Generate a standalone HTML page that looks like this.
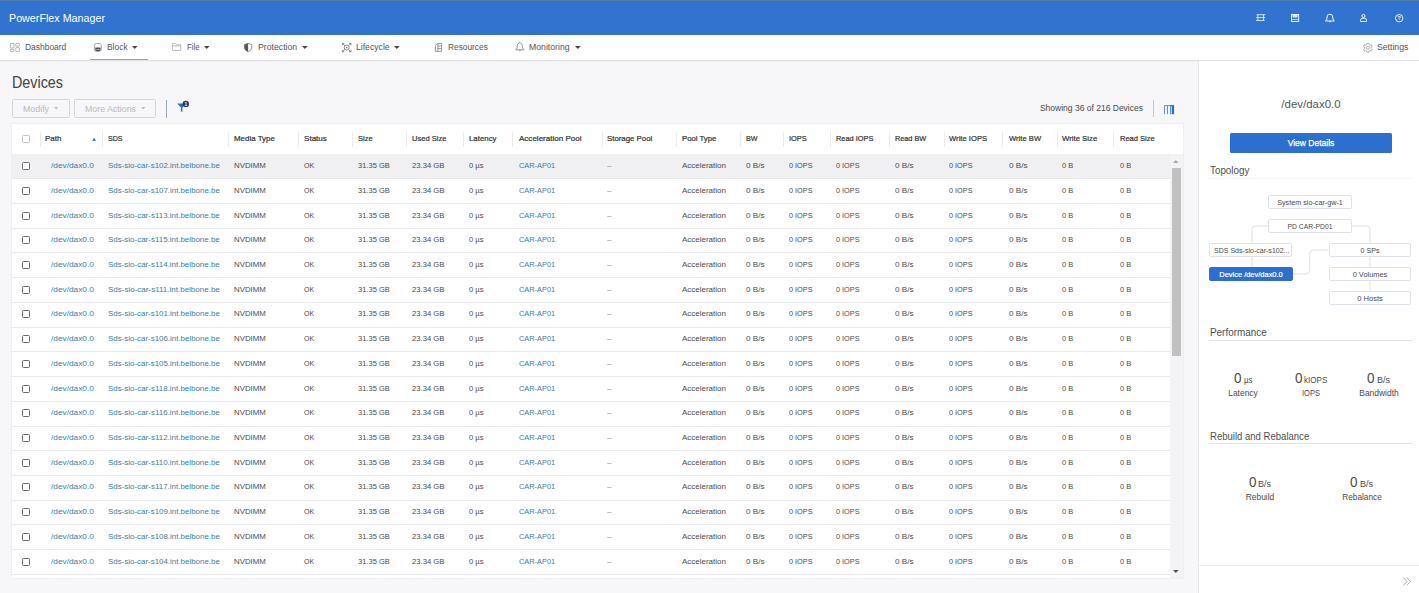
<!DOCTYPE html>
<html lang="en"><head><meta charset="utf-8"><title>PowerFlex Manager</title>
<style>
html,body{margin:0;padding:0}
body{width:1419px;height:593px;overflow:hidden;position:relative;background:#f7f6f8;font-family:"Liberation Sans", sans-serif;color:#4b4b4b}
.t{position:absolute;white-space:nowrap}
.abs{position:absolute}
.row{position:absolute;left:12px;width:1157.5px;height:24.8px;box-sizing:border-box;background:#fff}
.row.sel{background:#f0eff2}
.ln{position:absolute;left:12px;width:1157.5px;height:1px;background:#e9e8eb}
.cb{position:absolute;width:8px;height:8px;box-sizing:border-box;border:1px solid #6a6a6a;border-radius:1.5px;background:#fff}
.sep{position:absolute;width:1px;background:#ebeaed}
.box{position:absolute;box-sizing:border-box;border:1px solid #dfe1e8;border-radius:2px;background:#fff}
svg{position:absolute;overflow:visible}

</style></head><body>
<div class="abs" style="left:0;top:0;width:1419px;height:34.8px;background:#3273cf"></div>
<div class="abs" style="left:0;top:0;width:1419px;height:1px;background:#4f7fae"></div>
<div class="t" style="left:8.50px;top:10.83px;font-size:11.8px;line-height:15.34px;color:#fff;transform:scaleX(0.9094);transform-origin:0 50%;">PowerFlex Manager</div>
<svg style="left:1256px;top:14.1px" width="9.6" height="7.2" viewBox="0 0 9.6 7.2"><g fill="none" stroke="#eaf1fc" stroke-width="0.85"><path d="M0.6 0.7H9.4M0 3.6H9M0 6.5H8.6"/><path d="M1.9 0.7V6.5M7.6 0.7V6.5"/></g></svg>
<svg style="left:1291px;top:14px" width="8.2" height="8" viewBox="0 0 8.2 8"><rect x="0.5" y="0.5" width="7.2" height="7" fill="none" stroke="#fff" stroke-width="0.9"/><rect x="1.6" y="0.9" width="5" height="2.6" fill="#dfe9f8"/><path d="M0.5 5.6H7.7" stroke="#fff" stroke-width="0.7"/></svg>
<svg style="left:1324.8px;top:13.9px" width="9.8" height="8.4" viewBox="0 0 9.8 8.4"><path d="M3.6 0.5H6.2Q7.2 0.5 7.4 1.6L8.2 5.6L9.3 7H0.5L1.6 5.6L2.4 1.6Q2.6 0.5 3.6 0.5Z" fill="none" stroke="#fff" stroke-width="0.95" stroke-linejoin="round"/><path d="M4 7.5Q4.9 8.4 5.8 7.5" fill="none" stroke="#fff" stroke-width="0.8"/></svg>
<svg style="left:1360.4px;top:14.1px" width="7" height="8" viewBox="0 0 7 8"><g fill="none" stroke="#fff" stroke-width="0.9"><circle cx="3.5" cy="2" r="1.55"/><path d="M0.5 7.5V6.2Q0.5 4.4 2.3 4.4H4.7Q6.5 4.4 6.5 6.2V7.5Z" stroke-linejoin="round"/></g></svg>
<svg style="left:1394.7px;top:13.9px" width="8.4" height="8.4" viewBox="0 0 8.4 8.4"><circle cx="4.2" cy="4.2" r="3.7" fill="none" stroke="#fff" stroke-width="0.9"/><text x="4.2" y="6.2" font-size="5.4" font-weight="700" fill="#fff" text-anchor="middle" font-family='"Liberation Sans",sans-serif'>?</text></svg>

<div class="abs" style="left:0;top:34.8px;width:1419px;height:26.1px;background:#fff;border-bottom:1px solid #e1e0e3;box-sizing:border-box"></div>
<div class="abs" style="left:0;top:61px;width:1419px;height:1px;background:#f1f0f3"></div>
<div class="t" style="left:24.70px;top:42.41px;font-size:8.9px;line-height:11.57px;color:#555;transform:scaleX(0.9511);transform-origin:0 50%;">Dashboard</div>
<div class="t" style="left:106.90px;top:42.41px;font-size:8.9px;line-height:11.57px;color:#555;transform:scaleX(0.9492);transform-origin:0 50%;">Block</div>
<div class="t" style="left:186.60px;top:42.41px;font-size:8.9px;line-height:11.57px;color:#555;transform:scaleX(0.8803);transform-origin:0 50%;">File</div>
<div class="t" style="left:257.90px;top:42.41px;font-size:8.9px;line-height:11.57px;color:#555;transform:scaleX(0.9808);transform-origin:0 50%;">Protection</div>
<div class="t" style="left:355.70px;top:42.41px;font-size:8.9px;line-height:11.57px;color:#555;transform:scaleX(0.9730);transform-origin:0 50%;">Lifecycle</div>
<div class="t" style="left:447.90px;top:42.41px;font-size:8.9px;line-height:11.57px;color:#555;transform:scaleX(0.9382);transform-origin:0 50%;">Resources</div>
<div class="t" style="left:529.40px;top:42.41px;font-size:8.9px;line-height:11.57px;color:#555;transform:scaleX(0.9798);transform-origin:0 50%;">Monitoring</div>
<div class="t" style="left:1376.90px;top:42.41px;font-size:8.9px;line-height:11.57px;color:#555;transform:scaleX(0.9757);transform-origin:0 50%;">Settings</div>
<svg style="left:132.2px;top:45.9px" width="5.6" height="3" viewBox="0 0 5.6 3"><path d="M0 0H5.6L2.8 3Z" fill="#444"/></svg>
<svg style="left:204.1px;top:45.9px" width="5.6" height="3" viewBox="0 0 5.6 3"><path d="M0 0H5.6L2.8 3Z" fill="#444"/></svg>
<svg style="left:301.8px;top:45.9px" width="5.6" height="3" viewBox="0 0 5.6 3"><path d="M0 0H5.6L2.8 3Z" fill="#444"/></svg>
<svg style="left:393.6px;top:45.9px" width="5.6" height="3" viewBox="0 0 5.6 3"><path d="M0 0H5.6L2.8 3Z" fill="#444"/></svg>
<svg style="left:574.7px;top:45.9px" width="5.6" height="3" viewBox="0 0 5.6 3"><path d="M0 0H5.6L2.8 3Z" fill="#444"/></svg>
<div class="abs" style="left:90.1px;top:58.6px;width:57.9px;height:1.5px;background:#7eb0dc"></div>
<svg style="left:10.1px;top:42.6px" width="9.8" height="9" viewBox="0 0 9.8 9"><g fill="none" stroke="#9a999d" stroke-width="0.75"><rect x="0.4" y="0.4" width="3.6" height="4.6" rx="0.6"/><rect x="5.8" y="0.4" width="3.6" height="2.8" rx="0.6"/><rect x="0.4" y="6.4" width="3.6" height="2.2" rx="0.6"/><rect x="5.8" y="4.6" width="3.6" height="4" rx="0.6"/></g></svg>
<svg style="left:93.8px;top:42.6px" width="7.8" height="9" viewBox="0 0 7.8 9"><rect x="0.5" y="0.5" width="6.8" height="8" rx="2.2" fill="#fff" stroke="#8d8c90" stroke-width="0.8"/><path d="M1.3 4.6H6.5V6.6Q6.5 8 5.1 8H2.7Q1.3 8 1.3 6.6Z" fill="#4d4d50"/><rect x="2.4" y="6.3" width="3" height="0.7" fill="#d8d8da"/></svg>
<svg style="left:172.2px;top:43.2px" width="9.2" height="7.8" viewBox="0 0 9.2 7.8"><path d="M0.4 7.4V0.4H3.4L4.4 1.8H8.8V7.4Z M0.4 2.9H8.8" fill="none" stroke="#a4a3a7" stroke-width="0.75" stroke-linejoin="round"/></svg>
<svg style="left:244.4px;top:42.6px" width="8.2" height="9.2" viewBox="0 0 8.2 9.2"><path d="M4.1 0.4L7.8 1.6V4.4Q7.8 7.2 4.1 8.8Q0.4 7.2 0.4 4.4V1.6Z" fill="#fff" stroke="#77767a" stroke-width="0.8" stroke-linejoin="round"/><path d="M4.1 0.4V8.8Q0.4 7.2 0.4 4.4V1.6Z" fill="#58575b"/></svg>
<svg style="left:341.7px;top:42.6px" width="9.4" height="9.2" viewBox="0 0 9.4 9.2"><g fill="none" stroke="#6f6e72" stroke-width="0.8"><circle cx="4.7" cy="4.6" r="2.5"/><path d="M0.4 2.3V0.4H2.3M7.1 0.4H9V2.3M9 6.9V8.8H7.1M2.3 8.8H0.4V6.9"/><path d="M0.5 0.5L2.9 2.8M8.9 0.5L6.5 2.8M8.9 8.7L6.5 6.4M0.5 8.7L2.9 6.4" stroke-width="0.8"/></g><circle cx="4.7" cy="4.6" r="0.8" fill="#77767a"/></svg>
<svg style="left:435.2px;top:43.1px" width="7" height="8.8" viewBox="0 0 7 8.8"><g fill="none" stroke="#77767a" stroke-width="0.75" stroke-linejoin="round"><path d="M0.4 8.4V2.4L2.9 0.4H6.6V8.4Z"/><path d="M2.9 0.4V8.4M2.9 3H6.6M2.9 5.6H6.6"/></g></svg>
<svg style="left:514.8px;top:42.4px" width="9.6" height="9.4" viewBox="0 0 9.6 9.4"><path d="M4.8 0.4Q4.1 0.4 4.1 1.1Q2.2 1.7 2.2 4V6L0.6 7.8H9L7.4 6V4Q7.4 1.7 5.5 1.1Q5.5 0.4 4.8 0.4Z M3.9 8.2Q4.8 9.4 5.7 8.2" fill="none" stroke="#77767a" stroke-width="0.75" stroke-linejoin="round"/></svg>
<svg style="left:1363.1px;top:42.5px" width="9.8" height="9.6" viewBox="-4.9 -4.8 9.8 9.6"><g fill="none" stroke="#99989c" stroke-width="0.75" stroke-linejoin="round"><path d="M-0.8 -4.4H0.8L1.2 -3.3L2.3 -2.7L3.4 -3L4.2 -1.6L3.4 -0.7V0.7L4.2 1.6L3.4 3L2.3 2.7L1.2 3.3L0.8 4.4H-0.8L-1.2 3.3L-2.3 2.7L-3.4 3L-4.2 1.6L-3.4 0.7V-0.7L-4.2 -1.6L-3.4 -3L-2.3 -2.7L-1.2 -3.3Z"/><circle cx="0" cy="0" r="1.5"/></g></svg>

<div class="t" style="left:12.00px;top:71.71px;font-size:16.3px;line-height:21.19px;color:#444;transform:scaleX(0.8805);transform-origin:0 50%;">Devices</div>
<div class="abs" style="left:12px;top:99.2px;width:57.5px;height:18.6px;box-sizing:border-box;border:1px solid #d6d5d8;border-radius:1.5px;background:#f7f6f8"></div>
<div class="abs" style="left:74.3px;top:99.2px;width:81.6px;height:18.6px;box-sizing:border-box;border:1px solid #d6d5d8;border-radius:1.5px;background:#f7f6f8"></div>
<div class="t" style="left:22.50px;top:104.02px;font-size:8.9px;line-height:11.57px;color:#b9b8bc;transform:scaleX(0.9946);transform-origin:0 50%;">Modify</div>
<div class="t" style="left:84.80px;top:104.02px;font-size:8.9px;line-height:11.57px;color:#b9b8bc;transform:scaleX(0.9939);transform-origin:0 50%;">More Actions</div>
<svg style="left:54.0px;top:107.3px" width="4.4" height="2.6" viewBox="0 0 4.4 2.6"><path d="M0 0H4.4L2.2 2.6Z" fill="#bdbcc0"/></svg>
<svg style="left:141.2px;top:107.3px" width="4.4" height="2.6" viewBox="0 0 4.4 2.6"><path d="M0 0H4.4L2.2 2.6Z" fill="#bdbcc0"/></svg>
<div class="abs" style="left:166.2px;top:99.8px;width:1px;height:17.8px;background:#9ba6b9"></div>
<svg style="left:177px;top:100px" width="13" height="13" viewBox="0 0 13 13"><path d="M0.2 3.4H8.4L5.4 7.4V12L3.9 11.2V7.4Z" fill="#2b6fc4"/><circle cx="8.8" cy="3.9" r="3.2" fill="#1b3b6f"/><text x="8.8" y="5.6" font-size="4.8" font-weight="700" fill="#fff" text-anchor="middle" font-family='"Liberation Sans",sans-serif'>1</text></svg>
<div class="t" style="left:842.80px;width:300px;text-align:right;top:103.12px;font-size:8.9px;line-height:11.57px;color:#4a4a4a;transform:scaleX(0.9585);transform-origin:100% 50%;">Showing 36 of 216 Devices</div>
<div class="abs" style="left:1153.4px;top:99.5px;width:1px;height:17.5px;background:#c9c8cc"></div>
<svg style="left:1164px;top:105.4px" width="10.2" height="9.4" viewBox="0 0 10.2 9.4"><path d="M0.5 9.2V0.6H9.6M3.5 0.6V9.2" fill="none" stroke="#4c86d6" stroke-width="0.9"/><rect x="6.2" y="0.1" width="3.9" height="9.1" fill="#2b6fc4"/><rect x="6.9" y="1.1" width="0.9" height="8.1" fill="#dfe8f6"/></svg>
<div class="abs" style="left:12px;top:124.4px;width:1171.4px;height:453.4px;background:#fff;box-shadow:0 0 1.5px rgba(0,0,0,.12)"></div>
<div class="sep" style="left:39.5px;top:131.5px;height:15.5px"></div>
<div class="sep" style="left:102.4px;top:131.5px;height:15.5px"></div>
<div class="sep" style="left:228.2px;top:131.5px;height:15.5px"></div>
<div class="sep" style="left:298.2px;top:131.5px;height:15.5px"></div>
<div class="sep" style="left:351.5px;top:131.5px;height:15.5px"></div>
<div class="sep" style="left:406.0px;top:131.5px;height:15.5px"></div>
<div class="sep" style="left:462.5px;top:131.5px;height:15.5px"></div>
<div class="sep" style="left:512.4px;top:131.5px;height:15.5px"></div>
<div class="sep" style="left:601.6px;top:131.5px;height:15.5px"></div>
<div class="sep" style="left:675.6px;top:131.5px;height:15.5px"></div>
<div class="sep" style="left:740px;top:131.5px;height:15.5px"></div>
<div class="sep" style="left:783.2px;top:131.5px;height:15.5px"></div>
<div class="sep" style="left:829.5px;top:131.5px;height:15.5px"></div>
<div class="sep" style="left:888.6px;top:131.5px;height:15.5px"></div>
<div class="sep" style="left:943.7px;top:131.5px;height:15.5px"></div>
<div class="sep" style="left:1002.4px;top:131.5px;height:15.5px"></div>
<div class="sep" style="left:1056.6px;top:131.5px;height:15.5px"></div>
<div class="sep" style="left:1113.4px;top:131.5px;height:15.5px"></div>
<div class="cb" style="left:22.4px;top:135.2px;border-color:#c4c3c7;width:7.6px;height:7.6px"></div>
<div class="t" style="left:45.40px;top:134.34px;font-size:8.1px;line-height:10.53px;color:#333;transform:scaleX(0.9906);transform-origin:0 50%;-webkit-text-stroke:0.22px #333;">Path</div>
<div class="t" style="left:108.30px;top:134.34px;font-size:8.1px;line-height:10.53px;color:#333;transform:scaleX(0.8765);transform-origin:0 50%;-webkit-text-stroke:0.22px #333;">SDS</div>
<div class="t" style="left:234.00px;top:134.34px;font-size:8.1px;line-height:10.53px;color:#333;transform:scaleX(0.9807);transform-origin:0 50%;-webkit-text-stroke:0.22px #333;">Media Type</div>
<div class="t" style="left:304.00px;top:134.34px;font-size:8.1px;line-height:10.53px;color:#333;transform:scaleX(0.9977);transform-origin:0 50%;-webkit-text-stroke:0.22px #333;">Status</div>
<div class="t" style="left:357.60px;top:134.34px;font-size:8.1px;line-height:10.53px;color:#333;transform:scaleX(0.9270);transform-origin:0 50%;-webkit-text-stroke:0.22px #333;">Size</div>
<div class="t" style="left:411.80px;top:134.34px;font-size:8.1px;line-height:10.53px;color:#333;transform:scaleX(0.9325);transform-origin:0 50%;-webkit-text-stroke:0.22px #333;">Used Size</div>
<div class="t" style="left:468.80px;top:134.34px;font-size:8.1px;line-height:10.53px;color:#333;transform:scaleX(0.9697);transform-origin:0 50%;-webkit-text-stroke:0.22px #333;">Latency</div>
<div class="t" style="left:518.70px;top:134.34px;font-size:8.1px;line-height:10.53px;color:#333;transform:scaleX(0.9921);transform-origin:0 50%;-webkit-text-stroke:0.22px #333;">Acceleration Pool</div>
<div class="t" style="left:607.30px;top:134.34px;font-size:8.1px;line-height:10.53px;color:#333;transform:scaleX(0.9680);transform-origin:0 50%;-webkit-text-stroke:0.22px #333;">Storage Pool</div>
<div class="t" style="left:681.60px;top:134.34px;font-size:8.1px;line-height:10.53px;color:#333;transform:scaleX(0.9593);transform-origin:0 50%;-webkit-text-stroke:0.22px #333;">Pool Type</div>
<div class="t" style="left:746.00px;top:134.34px;font-size:8.1px;line-height:10.53px;color:#333;transform:scaleX(0.8814);transform-origin:0 50%;-webkit-text-stroke:0.22px #333;">BW</div>
<div class="t" style="left:788.50px;top:134.34px;font-size:8.1px;line-height:10.53px;color:#333;transform:scaleX(0.9202);transform-origin:0 50%;-webkit-text-stroke:0.22px #333;">IOPS</div>
<div class="t" style="left:835.60px;top:134.34px;font-size:8.1px;line-height:10.53px;color:#333;transform:scaleX(0.9157);transform-origin:0 50%;-webkit-text-stroke:0.22px #333;">Read IOPS</div>
<div class="t" style="left:895.00px;top:134.34px;font-size:8.1px;line-height:10.53px;color:#333;transform:scaleX(0.9007);transform-origin:0 50%;-webkit-text-stroke:0.22px #333;">Read BW</div>
<div class="t" style="left:948.80px;top:134.34px;font-size:8.1px;line-height:10.53px;color:#333;transform:scaleX(0.9448);transform-origin:0 50%;-webkit-text-stroke:0.22px #333;">Write IOPS</div>
<div class="t" style="left:1008.50px;top:134.34px;font-size:8.1px;line-height:10.53px;color:#333;transform:scaleX(0.9433);transform-origin:0 50%;-webkit-text-stroke:0.22px #333;">Write BW</div>
<div class="t" style="left:1062.40px;top:134.34px;font-size:8.1px;line-height:10.53px;color:#333;transform:scaleX(0.9582);transform-origin:0 50%;-webkit-text-stroke:0.22px #333;">Write Size</div>
<div class="t" style="left:1119.70px;top:134.34px;font-size:8.1px;line-height:10.53px;color:#333;transform:scaleX(0.9292);transform-origin:0 50%;-webkit-text-stroke:0.22px #333;">Read Size</div>
<svg style="left:91.8px;top:138.0px" width="4.2" height="2.7" viewBox="0 0 4.2 2.7"><path d="M0 2.7H4.2L2.1 0Z" fill="#2b6fc4"/></svg>
<div class="row sel" style="top:154.10px"></div>
<div class="ln" style="top:178px"></div>
<div class="cb" style="left:22.1px;top:162.06px"></div>
<div class="t" style="left:51.00px;top:161.09px;font-size:8.1px;line-height:10.53px;color:#3a7da2;transform:scaleX(1.0225);transform-origin:0 50%;">/dev/dax0.0</div>
<div class="t" style="left:108.40px;top:161.09px;font-size:8.1px;line-height:10.53px;color:#3a7da2;transform:scaleX(0.9783);transform-origin:0 50%;">Sds-sio-car-s102.int.belbone.be</div>
<div class="t" style="left:234.00px;top:161.09px;font-size:8.1px;line-height:10.53px;color:#4b4b4b;transform:scaleX(0.9687);transform-origin:0 50%;">NVDIMM</div>
<div class="t" style="left:304.00px;top:161.09px;font-size:8.1px;line-height:10.53px;color:#4b4b4b;transform:scaleX(0.8716);transform-origin:0 50%;">OK</div>
<div class="t" style="left:357.60px;top:161.09px;font-size:8.1px;line-height:10.53px;color:#4b4b4b;transform:scaleX(0.9297);transform-origin:0 50%;">31.35 GB</div>
<div class="t" style="left:411.80px;top:161.09px;font-size:8.1px;line-height:10.53px;color:#4b4b4b;transform:scaleX(0.9473);transform-origin:0 50%;">23.34 GB</div>
<div class="t" style="left:468.80px;top:161.09px;font-size:8.1px;line-height:10.53px;color:#4b4b4b;transform:scaleX(0.9438);transform-origin:0 50%;">0 µs</div>
<div class="t" style="left:518.70px;top:161.09px;font-size:8.1px;line-height:10.53px;color:#3a7da2;transform:scaleX(0.9143);transform-origin:0 50%;">CAR-AP01</div>
<div class="t" style="left:607.30px;top:161.09px;font-size:8.1px;line-height:10.53px;color:#777;transform:scaleX(0.8533);transform-origin:0 50%;">--</div>
<div class="t" style="left:681.60px;top:161.09px;font-size:8.1px;line-height:10.53px;color:#4b4b4b;transform:scaleX(0.9855);transform-origin:0 50%;">Acceleration</div>
<div class="t" style="left:746.00px;top:161.09px;font-size:8.1px;line-height:10.53px;color:#4b4b4b;transform:scaleX(1.0080);transform-origin:0 50%;">0 B/s</div>
<div class="t" style="left:788.50px;top:161.09px;font-size:8.1px;line-height:10.53px;color:#4b4b4b;transform:scaleX(0.9006);transform-origin:0 50%;">0 IOPS</div>
<div class="t" style="left:835.60px;top:161.09px;font-size:8.1px;line-height:10.53px;color:#4b4b4b;transform:scaleX(0.9006);transform-origin:0 50%;">0 IOPS</div>
<div class="t" style="left:895.00px;top:161.09px;font-size:8.1px;line-height:10.53px;color:#4b4b4b;transform:scaleX(1.0080);transform-origin:0 50%;">0 B/s</div>
<div class="t" style="left:948.80px;top:161.09px;font-size:8.1px;line-height:10.53px;color:#4b4b4b;transform:scaleX(0.9006);transform-origin:0 50%;">0 IOPS</div>
<div class="t" style="left:1008.50px;top:161.09px;font-size:8.1px;line-height:10.53px;color:#4b4b4b;transform:scaleX(1.0080);transform-origin:0 50%;">0 B/s</div>
<div class="t" style="left:1062.40px;top:161.09px;font-size:8.1px;line-height:10.53px;color:#4b4b4b;transform:scaleX(0.9213);transform-origin:0 50%;">0 B</div>
<div class="t" style="left:1119.70px;top:161.09px;font-size:8.1px;line-height:10.53px;color:#4b4b4b;transform:scaleX(0.9213);transform-origin:0 50%;">0 B</div>
<div class="ln" style="top:203px"></div>
<div class="cb" style="left:22.1px;top:186.78px"></div>
<div class="t" style="left:51.00px;top:185.82px;font-size:8.1px;line-height:10.53px;color:#3a7da2;transform:scaleX(1.0225);transform-origin:0 50%;">/dev/dax0.0</div>
<div class="t" style="left:108.40px;top:185.82px;font-size:8.1px;line-height:10.53px;color:#3a7da2;transform:scaleX(0.9783);transform-origin:0 50%;">Sds-sio-car-s107.int.belbone.be</div>
<div class="t" style="left:234.00px;top:185.82px;font-size:8.1px;line-height:10.53px;color:#4b4b4b;transform:scaleX(0.9687);transform-origin:0 50%;">NVDIMM</div>
<div class="t" style="left:304.00px;top:185.82px;font-size:8.1px;line-height:10.53px;color:#4b4b4b;transform:scaleX(0.8716);transform-origin:0 50%;">OK</div>
<div class="t" style="left:357.60px;top:185.82px;font-size:8.1px;line-height:10.53px;color:#4b4b4b;transform:scaleX(0.9297);transform-origin:0 50%;">31.35 GB</div>
<div class="t" style="left:411.80px;top:185.82px;font-size:8.1px;line-height:10.53px;color:#4b4b4b;transform:scaleX(0.9473);transform-origin:0 50%;">23.34 GB</div>
<div class="t" style="left:468.80px;top:185.82px;font-size:8.1px;line-height:10.53px;color:#4b4b4b;transform:scaleX(0.9438);transform-origin:0 50%;">0 µs</div>
<div class="t" style="left:518.70px;top:185.82px;font-size:8.1px;line-height:10.53px;color:#3a7da2;transform:scaleX(0.9143);transform-origin:0 50%;">CAR-AP01</div>
<div class="t" style="left:607.30px;top:185.82px;font-size:8.1px;line-height:10.53px;color:#777;transform:scaleX(0.8533);transform-origin:0 50%;">--</div>
<div class="t" style="left:681.60px;top:185.82px;font-size:8.1px;line-height:10.53px;color:#4b4b4b;transform:scaleX(0.9855);transform-origin:0 50%;">Acceleration</div>
<div class="t" style="left:746.00px;top:185.82px;font-size:8.1px;line-height:10.53px;color:#4b4b4b;transform:scaleX(1.0080);transform-origin:0 50%;">0 B/s</div>
<div class="t" style="left:788.50px;top:185.82px;font-size:8.1px;line-height:10.53px;color:#4b4b4b;transform:scaleX(0.9006);transform-origin:0 50%;">0 IOPS</div>
<div class="t" style="left:835.60px;top:185.82px;font-size:8.1px;line-height:10.53px;color:#4b4b4b;transform:scaleX(0.9006);transform-origin:0 50%;">0 IOPS</div>
<div class="t" style="left:895.00px;top:185.82px;font-size:8.1px;line-height:10.53px;color:#4b4b4b;transform:scaleX(1.0080);transform-origin:0 50%;">0 B/s</div>
<div class="t" style="left:948.80px;top:185.82px;font-size:8.1px;line-height:10.53px;color:#4b4b4b;transform:scaleX(0.9006);transform-origin:0 50%;">0 IOPS</div>
<div class="t" style="left:1008.50px;top:185.82px;font-size:8.1px;line-height:10.53px;color:#4b4b4b;transform:scaleX(1.0080);transform-origin:0 50%;">0 B/s</div>
<div class="t" style="left:1062.40px;top:185.82px;font-size:8.1px;line-height:10.53px;color:#4b4b4b;transform:scaleX(0.9213);transform-origin:0 50%;">0 B</div>
<div class="t" style="left:1119.70px;top:185.82px;font-size:8.1px;line-height:10.53px;color:#4b4b4b;transform:scaleX(0.9213);transform-origin:0 50%;">0 B</div>
<div class="ln" style="top:228px"></div>
<div class="cb" style="left:22.1px;top:211.50px"></div>
<div class="t" style="left:51.00px;top:210.53px;font-size:8.1px;line-height:10.53px;color:#3a7da2;transform:scaleX(1.0225);transform-origin:0 50%;">/dev/dax0.0</div>
<div class="t" style="left:108.40px;top:210.53px;font-size:8.1px;line-height:10.53px;color:#3a7da2;transform:scaleX(0.9834);transform-origin:0 50%;">Sds-sio-car-s113.int.belbone.be</div>
<div class="t" style="left:234.00px;top:210.53px;font-size:8.1px;line-height:10.53px;color:#4b4b4b;transform:scaleX(0.9687);transform-origin:0 50%;">NVDIMM</div>
<div class="t" style="left:304.00px;top:210.53px;font-size:8.1px;line-height:10.53px;color:#4b4b4b;transform:scaleX(0.8716);transform-origin:0 50%;">OK</div>
<div class="t" style="left:357.60px;top:210.53px;font-size:8.1px;line-height:10.53px;color:#4b4b4b;transform:scaleX(0.9297);transform-origin:0 50%;">31.35 GB</div>
<div class="t" style="left:411.80px;top:210.53px;font-size:8.1px;line-height:10.53px;color:#4b4b4b;transform:scaleX(0.9473);transform-origin:0 50%;">23.34 GB</div>
<div class="t" style="left:468.80px;top:210.53px;font-size:8.1px;line-height:10.53px;color:#4b4b4b;transform:scaleX(0.9438);transform-origin:0 50%;">0 µs</div>
<div class="t" style="left:518.70px;top:210.53px;font-size:8.1px;line-height:10.53px;color:#3a7da2;transform:scaleX(0.9143);transform-origin:0 50%;">CAR-AP01</div>
<div class="t" style="left:607.30px;top:210.53px;font-size:8.1px;line-height:10.53px;color:#777;transform:scaleX(0.8533);transform-origin:0 50%;">--</div>
<div class="t" style="left:681.60px;top:210.53px;font-size:8.1px;line-height:10.53px;color:#4b4b4b;transform:scaleX(0.9855);transform-origin:0 50%;">Acceleration</div>
<div class="t" style="left:746.00px;top:210.53px;font-size:8.1px;line-height:10.53px;color:#4b4b4b;transform:scaleX(1.0080);transform-origin:0 50%;">0 B/s</div>
<div class="t" style="left:788.50px;top:210.53px;font-size:8.1px;line-height:10.53px;color:#4b4b4b;transform:scaleX(0.9006);transform-origin:0 50%;">0 IOPS</div>
<div class="t" style="left:835.60px;top:210.53px;font-size:8.1px;line-height:10.53px;color:#4b4b4b;transform:scaleX(0.9006);transform-origin:0 50%;">0 IOPS</div>
<div class="t" style="left:895.00px;top:210.53px;font-size:8.1px;line-height:10.53px;color:#4b4b4b;transform:scaleX(1.0080);transform-origin:0 50%;">0 B/s</div>
<div class="t" style="left:948.80px;top:210.53px;font-size:8.1px;line-height:10.53px;color:#4b4b4b;transform:scaleX(0.9006);transform-origin:0 50%;">0 IOPS</div>
<div class="t" style="left:1008.50px;top:210.53px;font-size:8.1px;line-height:10.53px;color:#4b4b4b;transform:scaleX(1.0080);transform-origin:0 50%;">0 B/s</div>
<div class="t" style="left:1062.40px;top:210.53px;font-size:8.1px;line-height:10.53px;color:#4b4b4b;transform:scaleX(0.9213);transform-origin:0 50%;">0 B</div>
<div class="t" style="left:1119.70px;top:210.53px;font-size:8.1px;line-height:10.53px;color:#4b4b4b;transform:scaleX(0.9213);transform-origin:0 50%;">0 B</div>
<div class="ln" style="top:252px"></div>
<div class="cb" style="left:22.1px;top:236.22px"></div>
<div class="t" style="left:51.00px;top:235.26px;font-size:8.1px;line-height:10.53px;color:#3a7da2;transform:scaleX(1.0225);transform-origin:0 50%;">/dev/dax0.0</div>
<div class="t" style="left:108.40px;top:235.26px;font-size:8.1px;line-height:10.53px;color:#3a7da2;transform:scaleX(0.9834);transform-origin:0 50%;">Sds-sio-car-s115.int.belbone.be</div>
<div class="t" style="left:234.00px;top:235.26px;font-size:8.1px;line-height:10.53px;color:#4b4b4b;transform:scaleX(0.9687);transform-origin:0 50%;">NVDIMM</div>
<div class="t" style="left:304.00px;top:235.26px;font-size:8.1px;line-height:10.53px;color:#4b4b4b;transform:scaleX(0.8716);transform-origin:0 50%;">OK</div>
<div class="t" style="left:357.60px;top:235.26px;font-size:8.1px;line-height:10.53px;color:#4b4b4b;transform:scaleX(0.9297);transform-origin:0 50%;">31.35 GB</div>
<div class="t" style="left:411.80px;top:235.26px;font-size:8.1px;line-height:10.53px;color:#4b4b4b;transform:scaleX(0.9473);transform-origin:0 50%;">23.34 GB</div>
<div class="t" style="left:468.80px;top:235.26px;font-size:8.1px;line-height:10.53px;color:#4b4b4b;transform:scaleX(0.9438);transform-origin:0 50%;">0 µs</div>
<div class="t" style="left:518.70px;top:235.26px;font-size:8.1px;line-height:10.53px;color:#3a7da2;transform:scaleX(0.9143);transform-origin:0 50%;">CAR-AP01</div>
<div class="t" style="left:607.30px;top:235.26px;font-size:8.1px;line-height:10.53px;color:#777;transform:scaleX(0.8533);transform-origin:0 50%;">--</div>
<div class="t" style="left:681.60px;top:235.26px;font-size:8.1px;line-height:10.53px;color:#4b4b4b;transform:scaleX(0.9855);transform-origin:0 50%;">Acceleration</div>
<div class="t" style="left:746.00px;top:235.26px;font-size:8.1px;line-height:10.53px;color:#4b4b4b;transform:scaleX(1.0080);transform-origin:0 50%;">0 B/s</div>
<div class="t" style="left:788.50px;top:235.26px;font-size:8.1px;line-height:10.53px;color:#4b4b4b;transform:scaleX(0.9006);transform-origin:0 50%;">0 IOPS</div>
<div class="t" style="left:835.60px;top:235.26px;font-size:8.1px;line-height:10.53px;color:#4b4b4b;transform:scaleX(0.9006);transform-origin:0 50%;">0 IOPS</div>
<div class="t" style="left:895.00px;top:235.26px;font-size:8.1px;line-height:10.53px;color:#4b4b4b;transform:scaleX(1.0080);transform-origin:0 50%;">0 B/s</div>
<div class="t" style="left:948.80px;top:235.26px;font-size:8.1px;line-height:10.53px;color:#4b4b4b;transform:scaleX(0.9006);transform-origin:0 50%;">0 IOPS</div>
<div class="t" style="left:1008.50px;top:235.26px;font-size:8.1px;line-height:10.53px;color:#4b4b4b;transform:scaleX(1.0080);transform-origin:0 50%;">0 B/s</div>
<div class="t" style="left:1062.40px;top:235.26px;font-size:8.1px;line-height:10.53px;color:#4b4b4b;transform:scaleX(0.9213);transform-origin:0 50%;">0 B</div>
<div class="t" style="left:1119.70px;top:235.26px;font-size:8.1px;line-height:10.53px;color:#4b4b4b;transform:scaleX(0.9213);transform-origin:0 50%;">0 B</div>
<div class="ln" style="top:277px"></div>
<div class="cb" style="left:22.1px;top:260.94px"></div>
<div class="t" style="left:51.00px;top:259.97px;font-size:8.1px;line-height:10.53px;color:#3a7da2;transform:scaleX(1.0225);transform-origin:0 50%;">/dev/dax0.0</div>
<div class="t" style="left:108.40px;top:259.97px;font-size:8.1px;line-height:10.53px;color:#3a7da2;transform:scaleX(0.9834);transform-origin:0 50%;">Sds-sio-car-s114.int.belbone.be</div>
<div class="t" style="left:234.00px;top:259.97px;font-size:8.1px;line-height:10.53px;color:#4b4b4b;transform:scaleX(0.9687);transform-origin:0 50%;">NVDIMM</div>
<div class="t" style="left:304.00px;top:259.97px;font-size:8.1px;line-height:10.53px;color:#4b4b4b;transform:scaleX(0.8716);transform-origin:0 50%;">OK</div>
<div class="t" style="left:357.60px;top:259.97px;font-size:8.1px;line-height:10.53px;color:#4b4b4b;transform:scaleX(0.9297);transform-origin:0 50%;">31.35 GB</div>
<div class="t" style="left:411.80px;top:259.97px;font-size:8.1px;line-height:10.53px;color:#4b4b4b;transform:scaleX(0.9473);transform-origin:0 50%;">23.34 GB</div>
<div class="t" style="left:468.80px;top:259.97px;font-size:8.1px;line-height:10.53px;color:#4b4b4b;transform:scaleX(0.9438);transform-origin:0 50%;">0 µs</div>
<div class="t" style="left:518.70px;top:259.97px;font-size:8.1px;line-height:10.53px;color:#3a7da2;transform:scaleX(0.9143);transform-origin:0 50%;">CAR-AP01</div>
<div class="t" style="left:607.30px;top:259.97px;font-size:8.1px;line-height:10.53px;color:#777;transform:scaleX(0.8533);transform-origin:0 50%;">--</div>
<div class="t" style="left:681.60px;top:259.97px;font-size:8.1px;line-height:10.53px;color:#4b4b4b;transform:scaleX(0.9855);transform-origin:0 50%;">Acceleration</div>
<div class="t" style="left:746.00px;top:259.97px;font-size:8.1px;line-height:10.53px;color:#4b4b4b;transform:scaleX(1.0080);transform-origin:0 50%;">0 B/s</div>
<div class="t" style="left:788.50px;top:259.97px;font-size:8.1px;line-height:10.53px;color:#4b4b4b;transform:scaleX(0.9006);transform-origin:0 50%;">0 IOPS</div>
<div class="t" style="left:835.60px;top:259.97px;font-size:8.1px;line-height:10.53px;color:#4b4b4b;transform:scaleX(0.9006);transform-origin:0 50%;">0 IOPS</div>
<div class="t" style="left:895.00px;top:259.97px;font-size:8.1px;line-height:10.53px;color:#4b4b4b;transform:scaleX(1.0080);transform-origin:0 50%;">0 B/s</div>
<div class="t" style="left:948.80px;top:259.97px;font-size:8.1px;line-height:10.53px;color:#4b4b4b;transform:scaleX(0.9006);transform-origin:0 50%;">0 IOPS</div>
<div class="t" style="left:1008.50px;top:259.97px;font-size:8.1px;line-height:10.53px;color:#4b4b4b;transform:scaleX(1.0080);transform-origin:0 50%;">0 B/s</div>
<div class="t" style="left:1062.40px;top:259.97px;font-size:8.1px;line-height:10.53px;color:#4b4b4b;transform:scaleX(0.9213);transform-origin:0 50%;">0 B</div>
<div class="t" style="left:1119.70px;top:259.97px;font-size:8.1px;line-height:10.53px;color:#4b4b4b;transform:scaleX(0.9213);transform-origin:0 50%;">0 B</div>
<div class="ln" style="top:302px"></div>
<div class="cb" style="left:22.1px;top:285.66px"></div>
<div class="t" style="left:51.00px;top:284.69px;font-size:8.1px;line-height:10.53px;color:#3a7da2;transform:scaleX(1.0225);transform-origin:0 50%;">/dev/dax0.0</div>
<div class="t" style="left:108.40px;top:284.69px;font-size:8.1px;line-height:10.53px;color:#3a7da2;transform:scaleX(0.9887);transform-origin:0 50%;">Sds-sio-car-s111.int.belbone.be</div>
<div class="t" style="left:234.00px;top:284.69px;font-size:8.1px;line-height:10.53px;color:#4b4b4b;transform:scaleX(0.9687);transform-origin:0 50%;">NVDIMM</div>
<div class="t" style="left:304.00px;top:284.69px;font-size:8.1px;line-height:10.53px;color:#4b4b4b;transform:scaleX(0.8716);transform-origin:0 50%;">OK</div>
<div class="t" style="left:357.60px;top:284.69px;font-size:8.1px;line-height:10.53px;color:#4b4b4b;transform:scaleX(0.9297);transform-origin:0 50%;">31.35 GB</div>
<div class="t" style="left:411.80px;top:284.69px;font-size:8.1px;line-height:10.53px;color:#4b4b4b;transform:scaleX(0.9473);transform-origin:0 50%;">23.34 GB</div>
<div class="t" style="left:468.80px;top:284.69px;font-size:8.1px;line-height:10.53px;color:#4b4b4b;transform:scaleX(0.9438);transform-origin:0 50%;">0 µs</div>
<div class="t" style="left:518.70px;top:284.69px;font-size:8.1px;line-height:10.53px;color:#3a7da2;transform:scaleX(0.9143);transform-origin:0 50%;">CAR-AP01</div>
<div class="t" style="left:607.30px;top:284.69px;font-size:8.1px;line-height:10.53px;color:#777;transform:scaleX(0.8533);transform-origin:0 50%;">--</div>
<div class="t" style="left:681.60px;top:284.69px;font-size:8.1px;line-height:10.53px;color:#4b4b4b;transform:scaleX(0.9855);transform-origin:0 50%;">Acceleration</div>
<div class="t" style="left:746.00px;top:284.69px;font-size:8.1px;line-height:10.53px;color:#4b4b4b;transform:scaleX(1.0080);transform-origin:0 50%;">0 B/s</div>
<div class="t" style="left:788.50px;top:284.69px;font-size:8.1px;line-height:10.53px;color:#4b4b4b;transform:scaleX(0.9006);transform-origin:0 50%;">0 IOPS</div>
<div class="t" style="left:835.60px;top:284.69px;font-size:8.1px;line-height:10.53px;color:#4b4b4b;transform:scaleX(0.9006);transform-origin:0 50%;">0 IOPS</div>
<div class="t" style="left:895.00px;top:284.69px;font-size:8.1px;line-height:10.53px;color:#4b4b4b;transform:scaleX(1.0080);transform-origin:0 50%;">0 B/s</div>
<div class="t" style="left:948.80px;top:284.69px;font-size:8.1px;line-height:10.53px;color:#4b4b4b;transform:scaleX(0.9006);transform-origin:0 50%;">0 IOPS</div>
<div class="t" style="left:1008.50px;top:284.69px;font-size:8.1px;line-height:10.53px;color:#4b4b4b;transform:scaleX(1.0080);transform-origin:0 50%;">0 B/s</div>
<div class="t" style="left:1062.40px;top:284.69px;font-size:8.1px;line-height:10.53px;color:#4b4b4b;transform:scaleX(0.9213);transform-origin:0 50%;">0 B</div>
<div class="t" style="left:1119.70px;top:284.69px;font-size:8.1px;line-height:10.53px;color:#4b4b4b;transform:scaleX(0.9213);transform-origin:0 50%;">0 B</div>
<div class="ln" style="top:327px"></div>
<div class="cb" style="left:22.1px;top:310.38px"></div>
<div class="t" style="left:51.00px;top:309.41px;font-size:8.1px;line-height:10.53px;color:#3a7da2;transform:scaleX(1.0225);transform-origin:0 50%;">/dev/dax0.0</div>
<div class="t" style="left:108.40px;top:309.41px;font-size:8.1px;line-height:10.53px;color:#3a7da2;transform:scaleX(0.9783);transform-origin:0 50%;">Sds-sio-car-s101.int.belbone.be</div>
<div class="t" style="left:234.00px;top:309.41px;font-size:8.1px;line-height:10.53px;color:#4b4b4b;transform:scaleX(0.9687);transform-origin:0 50%;">NVDIMM</div>
<div class="t" style="left:304.00px;top:309.41px;font-size:8.1px;line-height:10.53px;color:#4b4b4b;transform:scaleX(0.8716);transform-origin:0 50%;">OK</div>
<div class="t" style="left:357.60px;top:309.41px;font-size:8.1px;line-height:10.53px;color:#4b4b4b;transform:scaleX(0.9297);transform-origin:0 50%;">31.35 GB</div>
<div class="t" style="left:411.80px;top:309.41px;font-size:8.1px;line-height:10.53px;color:#4b4b4b;transform:scaleX(0.9473);transform-origin:0 50%;">23.34 GB</div>
<div class="t" style="left:468.80px;top:309.41px;font-size:8.1px;line-height:10.53px;color:#4b4b4b;transform:scaleX(0.9438);transform-origin:0 50%;">0 µs</div>
<div class="t" style="left:518.70px;top:309.41px;font-size:8.1px;line-height:10.53px;color:#3a7da2;transform:scaleX(0.9143);transform-origin:0 50%;">CAR-AP01</div>
<div class="t" style="left:607.30px;top:309.41px;font-size:8.1px;line-height:10.53px;color:#777;transform:scaleX(0.8533);transform-origin:0 50%;">--</div>
<div class="t" style="left:681.60px;top:309.41px;font-size:8.1px;line-height:10.53px;color:#4b4b4b;transform:scaleX(0.9855);transform-origin:0 50%;">Acceleration</div>
<div class="t" style="left:746.00px;top:309.41px;font-size:8.1px;line-height:10.53px;color:#4b4b4b;transform:scaleX(1.0080);transform-origin:0 50%;">0 B/s</div>
<div class="t" style="left:788.50px;top:309.41px;font-size:8.1px;line-height:10.53px;color:#4b4b4b;transform:scaleX(0.9006);transform-origin:0 50%;">0 IOPS</div>
<div class="t" style="left:835.60px;top:309.41px;font-size:8.1px;line-height:10.53px;color:#4b4b4b;transform:scaleX(0.9006);transform-origin:0 50%;">0 IOPS</div>
<div class="t" style="left:895.00px;top:309.41px;font-size:8.1px;line-height:10.53px;color:#4b4b4b;transform:scaleX(1.0080);transform-origin:0 50%;">0 B/s</div>
<div class="t" style="left:948.80px;top:309.41px;font-size:8.1px;line-height:10.53px;color:#4b4b4b;transform:scaleX(0.9006);transform-origin:0 50%;">0 IOPS</div>
<div class="t" style="left:1008.50px;top:309.41px;font-size:8.1px;line-height:10.53px;color:#4b4b4b;transform:scaleX(1.0080);transform-origin:0 50%;">0 B/s</div>
<div class="t" style="left:1062.40px;top:309.41px;font-size:8.1px;line-height:10.53px;color:#4b4b4b;transform:scaleX(0.9213);transform-origin:0 50%;">0 B</div>
<div class="t" style="left:1119.70px;top:309.41px;font-size:8.1px;line-height:10.53px;color:#4b4b4b;transform:scaleX(0.9213);transform-origin:0 50%;">0 B</div>
<div class="ln" style="top:351px"></div>
<div class="cb" style="left:22.1px;top:335.10px"></div>
<div class="t" style="left:51.00px;top:334.13px;font-size:8.1px;line-height:10.53px;color:#3a7da2;transform:scaleX(1.0225);transform-origin:0 50%;">/dev/dax0.0</div>
<div class="t" style="left:108.40px;top:334.13px;font-size:8.1px;line-height:10.53px;color:#3a7da2;transform:scaleX(0.9783);transform-origin:0 50%;">Sds-sio-car-s106.int.belbone.be</div>
<div class="t" style="left:234.00px;top:334.13px;font-size:8.1px;line-height:10.53px;color:#4b4b4b;transform:scaleX(0.9687);transform-origin:0 50%;">NVDIMM</div>
<div class="t" style="left:304.00px;top:334.13px;font-size:8.1px;line-height:10.53px;color:#4b4b4b;transform:scaleX(0.8716);transform-origin:0 50%;">OK</div>
<div class="t" style="left:357.60px;top:334.13px;font-size:8.1px;line-height:10.53px;color:#4b4b4b;transform:scaleX(0.9297);transform-origin:0 50%;">31.35 GB</div>
<div class="t" style="left:411.80px;top:334.13px;font-size:8.1px;line-height:10.53px;color:#4b4b4b;transform:scaleX(0.9473);transform-origin:0 50%;">23.34 GB</div>
<div class="t" style="left:468.80px;top:334.13px;font-size:8.1px;line-height:10.53px;color:#4b4b4b;transform:scaleX(0.9438);transform-origin:0 50%;">0 µs</div>
<div class="t" style="left:518.70px;top:334.13px;font-size:8.1px;line-height:10.53px;color:#3a7da2;transform:scaleX(0.9143);transform-origin:0 50%;">CAR-AP01</div>
<div class="t" style="left:607.30px;top:334.13px;font-size:8.1px;line-height:10.53px;color:#777;transform:scaleX(0.8533);transform-origin:0 50%;">--</div>
<div class="t" style="left:681.60px;top:334.13px;font-size:8.1px;line-height:10.53px;color:#4b4b4b;transform:scaleX(0.9855);transform-origin:0 50%;">Acceleration</div>
<div class="t" style="left:746.00px;top:334.13px;font-size:8.1px;line-height:10.53px;color:#4b4b4b;transform:scaleX(1.0080);transform-origin:0 50%;">0 B/s</div>
<div class="t" style="left:788.50px;top:334.13px;font-size:8.1px;line-height:10.53px;color:#4b4b4b;transform:scaleX(0.9006);transform-origin:0 50%;">0 IOPS</div>
<div class="t" style="left:835.60px;top:334.13px;font-size:8.1px;line-height:10.53px;color:#4b4b4b;transform:scaleX(0.9006);transform-origin:0 50%;">0 IOPS</div>
<div class="t" style="left:895.00px;top:334.13px;font-size:8.1px;line-height:10.53px;color:#4b4b4b;transform:scaleX(1.0080);transform-origin:0 50%;">0 B/s</div>
<div class="t" style="left:948.80px;top:334.13px;font-size:8.1px;line-height:10.53px;color:#4b4b4b;transform:scaleX(0.9006);transform-origin:0 50%;">0 IOPS</div>
<div class="t" style="left:1008.50px;top:334.13px;font-size:8.1px;line-height:10.53px;color:#4b4b4b;transform:scaleX(1.0080);transform-origin:0 50%;">0 B/s</div>
<div class="t" style="left:1062.40px;top:334.13px;font-size:8.1px;line-height:10.53px;color:#4b4b4b;transform:scaleX(0.9213);transform-origin:0 50%;">0 B</div>
<div class="t" style="left:1119.70px;top:334.13px;font-size:8.1px;line-height:10.53px;color:#4b4b4b;transform:scaleX(0.9213);transform-origin:0 50%;">0 B</div>
<div class="ln" style="top:376px"></div>
<div class="cb" style="left:22.1px;top:359.82px"></div>
<div class="t" style="left:51.00px;top:358.86px;font-size:8.1px;line-height:10.53px;color:#3a7da2;transform:scaleX(1.0225);transform-origin:0 50%;">/dev/dax0.0</div>
<div class="t" style="left:108.40px;top:358.86px;font-size:8.1px;line-height:10.53px;color:#3a7da2;transform:scaleX(0.9783);transform-origin:0 50%;">Sds-sio-car-s105.int.belbone.be</div>
<div class="t" style="left:234.00px;top:358.86px;font-size:8.1px;line-height:10.53px;color:#4b4b4b;transform:scaleX(0.9687);transform-origin:0 50%;">NVDIMM</div>
<div class="t" style="left:304.00px;top:358.86px;font-size:8.1px;line-height:10.53px;color:#4b4b4b;transform:scaleX(0.8716);transform-origin:0 50%;">OK</div>
<div class="t" style="left:357.60px;top:358.86px;font-size:8.1px;line-height:10.53px;color:#4b4b4b;transform:scaleX(0.9297);transform-origin:0 50%;">31.35 GB</div>
<div class="t" style="left:411.80px;top:358.86px;font-size:8.1px;line-height:10.53px;color:#4b4b4b;transform:scaleX(0.9473);transform-origin:0 50%;">23.34 GB</div>
<div class="t" style="left:468.80px;top:358.86px;font-size:8.1px;line-height:10.53px;color:#4b4b4b;transform:scaleX(0.9438);transform-origin:0 50%;">0 µs</div>
<div class="t" style="left:518.70px;top:358.86px;font-size:8.1px;line-height:10.53px;color:#3a7da2;transform:scaleX(0.9143);transform-origin:0 50%;">CAR-AP01</div>
<div class="t" style="left:607.30px;top:358.86px;font-size:8.1px;line-height:10.53px;color:#777;transform:scaleX(0.8533);transform-origin:0 50%;">--</div>
<div class="t" style="left:681.60px;top:358.86px;font-size:8.1px;line-height:10.53px;color:#4b4b4b;transform:scaleX(0.9855);transform-origin:0 50%;">Acceleration</div>
<div class="t" style="left:746.00px;top:358.86px;font-size:8.1px;line-height:10.53px;color:#4b4b4b;transform:scaleX(1.0080);transform-origin:0 50%;">0 B/s</div>
<div class="t" style="left:788.50px;top:358.86px;font-size:8.1px;line-height:10.53px;color:#4b4b4b;transform:scaleX(0.9006);transform-origin:0 50%;">0 IOPS</div>
<div class="t" style="left:835.60px;top:358.86px;font-size:8.1px;line-height:10.53px;color:#4b4b4b;transform:scaleX(0.9006);transform-origin:0 50%;">0 IOPS</div>
<div class="t" style="left:895.00px;top:358.86px;font-size:8.1px;line-height:10.53px;color:#4b4b4b;transform:scaleX(1.0080);transform-origin:0 50%;">0 B/s</div>
<div class="t" style="left:948.80px;top:358.86px;font-size:8.1px;line-height:10.53px;color:#4b4b4b;transform:scaleX(0.9006);transform-origin:0 50%;">0 IOPS</div>
<div class="t" style="left:1008.50px;top:358.86px;font-size:8.1px;line-height:10.53px;color:#4b4b4b;transform:scaleX(1.0080);transform-origin:0 50%;">0 B/s</div>
<div class="t" style="left:1062.40px;top:358.86px;font-size:8.1px;line-height:10.53px;color:#4b4b4b;transform:scaleX(0.9213);transform-origin:0 50%;">0 B</div>
<div class="t" style="left:1119.70px;top:358.86px;font-size:8.1px;line-height:10.53px;color:#4b4b4b;transform:scaleX(0.9213);transform-origin:0 50%;">0 B</div>
<div class="ln" style="top:401px"></div>
<div class="cb" style="left:22.1px;top:384.54px"></div>
<div class="t" style="left:51.00px;top:383.57px;font-size:8.1px;line-height:10.53px;color:#3a7da2;transform:scaleX(1.0225);transform-origin:0 50%;">/dev/dax0.0</div>
<div class="t" style="left:108.40px;top:383.57px;font-size:8.1px;line-height:10.53px;color:#3a7da2;transform:scaleX(0.9834);transform-origin:0 50%;">Sds-sio-car-s118.int.belbone.be</div>
<div class="t" style="left:234.00px;top:383.57px;font-size:8.1px;line-height:10.53px;color:#4b4b4b;transform:scaleX(0.9687);transform-origin:0 50%;">NVDIMM</div>
<div class="t" style="left:304.00px;top:383.57px;font-size:8.1px;line-height:10.53px;color:#4b4b4b;transform:scaleX(0.8716);transform-origin:0 50%;">OK</div>
<div class="t" style="left:357.60px;top:383.57px;font-size:8.1px;line-height:10.53px;color:#4b4b4b;transform:scaleX(0.9297);transform-origin:0 50%;">31.35 GB</div>
<div class="t" style="left:411.80px;top:383.57px;font-size:8.1px;line-height:10.53px;color:#4b4b4b;transform:scaleX(0.9473);transform-origin:0 50%;">23.34 GB</div>
<div class="t" style="left:468.80px;top:383.57px;font-size:8.1px;line-height:10.53px;color:#4b4b4b;transform:scaleX(0.9438);transform-origin:0 50%;">0 µs</div>
<div class="t" style="left:518.70px;top:383.57px;font-size:8.1px;line-height:10.53px;color:#3a7da2;transform:scaleX(0.9143);transform-origin:0 50%;">CAR-AP01</div>
<div class="t" style="left:607.30px;top:383.57px;font-size:8.1px;line-height:10.53px;color:#777;transform:scaleX(0.8533);transform-origin:0 50%;">--</div>
<div class="t" style="left:681.60px;top:383.57px;font-size:8.1px;line-height:10.53px;color:#4b4b4b;transform:scaleX(0.9855);transform-origin:0 50%;">Acceleration</div>
<div class="t" style="left:746.00px;top:383.57px;font-size:8.1px;line-height:10.53px;color:#4b4b4b;transform:scaleX(1.0080);transform-origin:0 50%;">0 B/s</div>
<div class="t" style="left:788.50px;top:383.57px;font-size:8.1px;line-height:10.53px;color:#4b4b4b;transform:scaleX(0.9006);transform-origin:0 50%;">0 IOPS</div>
<div class="t" style="left:835.60px;top:383.57px;font-size:8.1px;line-height:10.53px;color:#4b4b4b;transform:scaleX(0.9006);transform-origin:0 50%;">0 IOPS</div>
<div class="t" style="left:895.00px;top:383.57px;font-size:8.1px;line-height:10.53px;color:#4b4b4b;transform:scaleX(1.0080);transform-origin:0 50%;">0 B/s</div>
<div class="t" style="left:948.80px;top:383.57px;font-size:8.1px;line-height:10.53px;color:#4b4b4b;transform:scaleX(0.9006);transform-origin:0 50%;">0 IOPS</div>
<div class="t" style="left:1008.50px;top:383.57px;font-size:8.1px;line-height:10.53px;color:#4b4b4b;transform:scaleX(1.0080);transform-origin:0 50%;">0 B/s</div>
<div class="t" style="left:1062.40px;top:383.57px;font-size:8.1px;line-height:10.53px;color:#4b4b4b;transform:scaleX(0.9213);transform-origin:0 50%;">0 B</div>
<div class="t" style="left:1119.70px;top:383.57px;font-size:8.1px;line-height:10.53px;color:#4b4b4b;transform:scaleX(0.9213);transform-origin:0 50%;">0 B</div>
<div class="ln" style="top:426px"></div>
<div class="cb" style="left:22.1px;top:409.26px"></div>
<div class="t" style="left:51.00px;top:408.29px;font-size:8.1px;line-height:10.53px;color:#3a7da2;transform:scaleX(1.0225);transform-origin:0 50%;">/dev/dax0.0</div>
<div class="t" style="left:108.40px;top:408.29px;font-size:8.1px;line-height:10.53px;color:#3a7da2;transform:scaleX(0.9834);transform-origin:0 50%;">Sds-sio-car-s116.int.belbone.be</div>
<div class="t" style="left:234.00px;top:408.29px;font-size:8.1px;line-height:10.53px;color:#4b4b4b;transform:scaleX(0.9687);transform-origin:0 50%;">NVDIMM</div>
<div class="t" style="left:304.00px;top:408.29px;font-size:8.1px;line-height:10.53px;color:#4b4b4b;transform:scaleX(0.8716);transform-origin:0 50%;">OK</div>
<div class="t" style="left:357.60px;top:408.29px;font-size:8.1px;line-height:10.53px;color:#4b4b4b;transform:scaleX(0.9297);transform-origin:0 50%;">31.35 GB</div>
<div class="t" style="left:411.80px;top:408.29px;font-size:8.1px;line-height:10.53px;color:#4b4b4b;transform:scaleX(0.9473);transform-origin:0 50%;">23.34 GB</div>
<div class="t" style="left:468.80px;top:408.29px;font-size:8.1px;line-height:10.53px;color:#4b4b4b;transform:scaleX(0.9438);transform-origin:0 50%;">0 µs</div>
<div class="t" style="left:518.70px;top:408.29px;font-size:8.1px;line-height:10.53px;color:#3a7da2;transform:scaleX(0.9143);transform-origin:0 50%;">CAR-AP01</div>
<div class="t" style="left:607.30px;top:408.29px;font-size:8.1px;line-height:10.53px;color:#777;transform:scaleX(0.8533);transform-origin:0 50%;">--</div>
<div class="t" style="left:681.60px;top:408.29px;font-size:8.1px;line-height:10.53px;color:#4b4b4b;transform:scaleX(0.9855);transform-origin:0 50%;">Acceleration</div>
<div class="t" style="left:746.00px;top:408.29px;font-size:8.1px;line-height:10.53px;color:#4b4b4b;transform:scaleX(1.0080);transform-origin:0 50%;">0 B/s</div>
<div class="t" style="left:788.50px;top:408.29px;font-size:8.1px;line-height:10.53px;color:#4b4b4b;transform:scaleX(0.9006);transform-origin:0 50%;">0 IOPS</div>
<div class="t" style="left:835.60px;top:408.29px;font-size:8.1px;line-height:10.53px;color:#4b4b4b;transform:scaleX(0.9006);transform-origin:0 50%;">0 IOPS</div>
<div class="t" style="left:895.00px;top:408.29px;font-size:8.1px;line-height:10.53px;color:#4b4b4b;transform:scaleX(1.0080);transform-origin:0 50%;">0 B/s</div>
<div class="t" style="left:948.80px;top:408.29px;font-size:8.1px;line-height:10.53px;color:#4b4b4b;transform:scaleX(0.9006);transform-origin:0 50%;">0 IOPS</div>
<div class="t" style="left:1008.50px;top:408.29px;font-size:8.1px;line-height:10.53px;color:#4b4b4b;transform:scaleX(1.0080);transform-origin:0 50%;">0 B/s</div>
<div class="t" style="left:1062.40px;top:408.29px;font-size:8.1px;line-height:10.53px;color:#4b4b4b;transform:scaleX(0.9213);transform-origin:0 50%;">0 B</div>
<div class="t" style="left:1119.70px;top:408.29px;font-size:8.1px;line-height:10.53px;color:#4b4b4b;transform:scaleX(0.9213);transform-origin:0 50%;">0 B</div>
<div class="ln" style="top:450px"></div>
<div class="cb" style="left:22.1px;top:433.98px"></div>
<div class="t" style="left:51.00px;top:433.01px;font-size:8.1px;line-height:10.53px;color:#3a7da2;transform:scaleX(1.0225);transform-origin:0 50%;">/dev/dax0.0</div>
<div class="t" style="left:108.40px;top:433.01px;font-size:8.1px;line-height:10.53px;color:#3a7da2;transform:scaleX(0.9834);transform-origin:0 50%;">Sds-sio-car-s112.int.belbone.be</div>
<div class="t" style="left:234.00px;top:433.01px;font-size:8.1px;line-height:10.53px;color:#4b4b4b;transform:scaleX(0.9687);transform-origin:0 50%;">NVDIMM</div>
<div class="t" style="left:304.00px;top:433.01px;font-size:8.1px;line-height:10.53px;color:#4b4b4b;transform:scaleX(0.8716);transform-origin:0 50%;">OK</div>
<div class="t" style="left:357.60px;top:433.01px;font-size:8.1px;line-height:10.53px;color:#4b4b4b;transform:scaleX(0.9297);transform-origin:0 50%;">31.35 GB</div>
<div class="t" style="left:411.80px;top:433.01px;font-size:8.1px;line-height:10.53px;color:#4b4b4b;transform:scaleX(0.9473);transform-origin:0 50%;">23.34 GB</div>
<div class="t" style="left:468.80px;top:433.01px;font-size:8.1px;line-height:10.53px;color:#4b4b4b;transform:scaleX(0.9438);transform-origin:0 50%;">0 µs</div>
<div class="t" style="left:518.70px;top:433.01px;font-size:8.1px;line-height:10.53px;color:#3a7da2;transform:scaleX(0.9143);transform-origin:0 50%;">CAR-AP01</div>
<div class="t" style="left:607.30px;top:433.01px;font-size:8.1px;line-height:10.53px;color:#777;transform:scaleX(0.8533);transform-origin:0 50%;">--</div>
<div class="t" style="left:681.60px;top:433.01px;font-size:8.1px;line-height:10.53px;color:#4b4b4b;transform:scaleX(0.9855);transform-origin:0 50%;">Acceleration</div>
<div class="t" style="left:746.00px;top:433.01px;font-size:8.1px;line-height:10.53px;color:#4b4b4b;transform:scaleX(1.0080);transform-origin:0 50%;">0 B/s</div>
<div class="t" style="left:788.50px;top:433.01px;font-size:8.1px;line-height:10.53px;color:#4b4b4b;transform:scaleX(0.9006);transform-origin:0 50%;">0 IOPS</div>
<div class="t" style="left:835.60px;top:433.01px;font-size:8.1px;line-height:10.53px;color:#4b4b4b;transform:scaleX(0.9006);transform-origin:0 50%;">0 IOPS</div>
<div class="t" style="left:895.00px;top:433.01px;font-size:8.1px;line-height:10.53px;color:#4b4b4b;transform:scaleX(1.0080);transform-origin:0 50%;">0 B/s</div>
<div class="t" style="left:948.80px;top:433.01px;font-size:8.1px;line-height:10.53px;color:#4b4b4b;transform:scaleX(0.9006);transform-origin:0 50%;">0 IOPS</div>
<div class="t" style="left:1008.50px;top:433.01px;font-size:8.1px;line-height:10.53px;color:#4b4b4b;transform:scaleX(1.0080);transform-origin:0 50%;">0 B/s</div>
<div class="t" style="left:1062.40px;top:433.01px;font-size:8.1px;line-height:10.53px;color:#4b4b4b;transform:scaleX(0.9213);transform-origin:0 50%;">0 B</div>
<div class="t" style="left:1119.70px;top:433.01px;font-size:8.1px;line-height:10.53px;color:#4b4b4b;transform:scaleX(0.9213);transform-origin:0 50%;">0 B</div>
<div class="ln" style="top:475px"></div>
<div class="cb" style="left:22.1px;top:458.70px"></div>
<div class="t" style="left:51.00px;top:457.74px;font-size:8.1px;line-height:10.53px;color:#3a7da2;transform:scaleX(1.0225);transform-origin:0 50%;">/dev/dax0.0</div>
<div class="t" style="left:108.40px;top:457.74px;font-size:8.1px;line-height:10.53px;color:#3a7da2;transform:scaleX(0.9834);transform-origin:0 50%;">Sds-sio-car-s110.int.belbone.be</div>
<div class="t" style="left:234.00px;top:457.74px;font-size:8.1px;line-height:10.53px;color:#4b4b4b;transform:scaleX(0.9687);transform-origin:0 50%;">NVDIMM</div>
<div class="t" style="left:304.00px;top:457.74px;font-size:8.1px;line-height:10.53px;color:#4b4b4b;transform:scaleX(0.8716);transform-origin:0 50%;">OK</div>
<div class="t" style="left:357.60px;top:457.74px;font-size:8.1px;line-height:10.53px;color:#4b4b4b;transform:scaleX(0.9297);transform-origin:0 50%;">31.35 GB</div>
<div class="t" style="left:411.80px;top:457.74px;font-size:8.1px;line-height:10.53px;color:#4b4b4b;transform:scaleX(0.9473);transform-origin:0 50%;">23.34 GB</div>
<div class="t" style="left:468.80px;top:457.74px;font-size:8.1px;line-height:10.53px;color:#4b4b4b;transform:scaleX(0.9438);transform-origin:0 50%;">0 µs</div>
<div class="t" style="left:518.70px;top:457.74px;font-size:8.1px;line-height:10.53px;color:#3a7da2;transform:scaleX(0.9143);transform-origin:0 50%;">CAR-AP01</div>
<div class="t" style="left:607.30px;top:457.74px;font-size:8.1px;line-height:10.53px;color:#777;transform:scaleX(0.8533);transform-origin:0 50%;">--</div>
<div class="t" style="left:681.60px;top:457.74px;font-size:8.1px;line-height:10.53px;color:#4b4b4b;transform:scaleX(0.9855);transform-origin:0 50%;">Acceleration</div>
<div class="t" style="left:746.00px;top:457.74px;font-size:8.1px;line-height:10.53px;color:#4b4b4b;transform:scaleX(1.0080);transform-origin:0 50%;">0 B/s</div>
<div class="t" style="left:788.50px;top:457.74px;font-size:8.1px;line-height:10.53px;color:#4b4b4b;transform:scaleX(0.9006);transform-origin:0 50%;">0 IOPS</div>
<div class="t" style="left:835.60px;top:457.74px;font-size:8.1px;line-height:10.53px;color:#4b4b4b;transform:scaleX(0.9006);transform-origin:0 50%;">0 IOPS</div>
<div class="t" style="left:895.00px;top:457.74px;font-size:8.1px;line-height:10.53px;color:#4b4b4b;transform:scaleX(1.0080);transform-origin:0 50%;">0 B/s</div>
<div class="t" style="left:948.80px;top:457.74px;font-size:8.1px;line-height:10.53px;color:#4b4b4b;transform:scaleX(0.9006);transform-origin:0 50%;">0 IOPS</div>
<div class="t" style="left:1008.50px;top:457.74px;font-size:8.1px;line-height:10.53px;color:#4b4b4b;transform:scaleX(1.0080);transform-origin:0 50%;">0 B/s</div>
<div class="t" style="left:1062.40px;top:457.74px;font-size:8.1px;line-height:10.53px;color:#4b4b4b;transform:scaleX(0.9213);transform-origin:0 50%;">0 B</div>
<div class="t" style="left:1119.70px;top:457.74px;font-size:8.1px;line-height:10.53px;color:#4b4b4b;transform:scaleX(0.9213);transform-origin:0 50%;">0 B</div>
<div class="ln" style="top:500px"></div>
<div class="cb" style="left:22.1px;top:483.42px"></div>
<div class="t" style="left:51.00px;top:482.46px;font-size:8.1px;line-height:10.53px;color:#3a7da2;transform:scaleX(1.0225);transform-origin:0 50%;">/dev/dax0.0</div>
<div class="t" style="left:108.40px;top:482.46px;font-size:8.1px;line-height:10.53px;color:#3a7da2;transform:scaleX(0.9834);transform-origin:0 50%;">Sds-sio-car-s117.int.belbone.be</div>
<div class="t" style="left:234.00px;top:482.46px;font-size:8.1px;line-height:10.53px;color:#4b4b4b;transform:scaleX(0.9687);transform-origin:0 50%;">NVDIMM</div>
<div class="t" style="left:304.00px;top:482.46px;font-size:8.1px;line-height:10.53px;color:#4b4b4b;transform:scaleX(0.8716);transform-origin:0 50%;">OK</div>
<div class="t" style="left:357.60px;top:482.46px;font-size:8.1px;line-height:10.53px;color:#4b4b4b;transform:scaleX(0.9297);transform-origin:0 50%;">31.35 GB</div>
<div class="t" style="left:411.80px;top:482.46px;font-size:8.1px;line-height:10.53px;color:#4b4b4b;transform:scaleX(0.9473);transform-origin:0 50%;">23.34 GB</div>
<div class="t" style="left:468.80px;top:482.46px;font-size:8.1px;line-height:10.53px;color:#4b4b4b;transform:scaleX(0.9438);transform-origin:0 50%;">0 µs</div>
<div class="t" style="left:518.70px;top:482.46px;font-size:8.1px;line-height:10.53px;color:#3a7da2;transform:scaleX(0.9143);transform-origin:0 50%;">CAR-AP01</div>
<div class="t" style="left:607.30px;top:482.46px;font-size:8.1px;line-height:10.53px;color:#777;transform:scaleX(0.8533);transform-origin:0 50%;">--</div>
<div class="t" style="left:681.60px;top:482.46px;font-size:8.1px;line-height:10.53px;color:#4b4b4b;transform:scaleX(0.9855);transform-origin:0 50%;">Acceleration</div>
<div class="t" style="left:746.00px;top:482.46px;font-size:8.1px;line-height:10.53px;color:#4b4b4b;transform:scaleX(1.0080);transform-origin:0 50%;">0 B/s</div>
<div class="t" style="left:788.50px;top:482.46px;font-size:8.1px;line-height:10.53px;color:#4b4b4b;transform:scaleX(0.9006);transform-origin:0 50%;">0 IOPS</div>
<div class="t" style="left:835.60px;top:482.46px;font-size:8.1px;line-height:10.53px;color:#4b4b4b;transform:scaleX(0.9006);transform-origin:0 50%;">0 IOPS</div>
<div class="t" style="left:895.00px;top:482.46px;font-size:8.1px;line-height:10.53px;color:#4b4b4b;transform:scaleX(1.0080);transform-origin:0 50%;">0 B/s</div>
<div class="t" style="left:948.80px;top:482.46px;font-size:8.1px;line-height:10.53px;color:#4b4b4b;transform:scaleX(0.9006);transform-origin:0 50%;">0 IOPS</div>
<div class="t" style="left:1008.50px;top:482.46px;font-size:8.1px;line-height:10.53px;color:#4b4b4b;transform:scaleX(1.0080);transform-origin:0 50%;">0 B/s</div>
<div class="t" style="left:1062.40px;top:482.46px;font-size:8.1px;line-height:10.53px;color:#4b4b4b;transform:scaleX(0.9213);transform-origin:0 50%;">0 B</div>
<div class="t" style="left:1119.70px;top:482.46px;font-size:8.1px;line-height:10.53px;color:#4b4b4b;transform:scaleX(0.9213);transform-origin:0 50%;">0 B</div>
<div class="ln" style="top:524px"></div>
<div class="cb" style="left:22.1px;top:508.14px"></div>
<div class="t" style="left:51.00px;top:507.17px;font-size:8.1px;line-height:10.53px;color:#3a7da2;transform:scaleX(1.0225);transform-origin:0 50%;">/dev/dax0.0</div>
<div class="t" style="left:108.40px;top:507.17px;font-size:8.1px;line-height:10.53px;color:#3a7da2;transform:scaleX(0.9783);transform-origin:0 50%;">Sds-sio-car-s109.int.belbone.be</div>
<div class="t" style="left:234.00px;top:507.17px;font-size:8.1px;line-height:10.53px;color:#4b4b4b;transform:scaleX(0.9687);transform-origin:0 50%;">NVDIMM</div>
<div class="t" style="left:304.00px;top:507.17px;font-size:8.1px;line-height:10.53px;color:#4b4b4b;transform:scaleX(0.8716);transform-origin:0 50%;">OK</div>
<div class="t" style="left:357.60px;top:507.17px;font-size:8.1px;line-height:10.53px;color:#4b4b4b;transform:scaleX(0.9297);transform-origin:0 50%;">31.35 GB</div>
<div class="t" style="left:411.80px;top:507.17px;font-size:8.1px;line-height:10.53px;color:#4b4b4b;transform:scaleX(0.9473);transform-origin:0 50%;">23.34 GB</div>
<div class="t" style="left:468.80px;top:507.17px;font-size:8.1px;line-height:10.53px;color:#4b4b4b;transform:scaleX(0.9438);transform-origin:0 50%;">0 µs</div>
<div class="t" style="left:518.70px;top:507.17px;font-size:8.1px;line-height:10.53px;color:#3a7da2;transform:scaleX(0.9143);transform-origin:0 50%;">CAR-AP01</div>
<div class="t" style="left:607.30px;top:507.17px;font-size:8.1px;line-height:10.53px;color:#777;transform:scaleX(0.8533);transform-origin:0 50%;">--</div>
<div class="t" style="left:681.60px;top:507.17px;font-size:8.1px;line-height:10.53px;color:#4b4b4b;transform:scaleX(0.9855);transform-origin:0 50%;">Acceleration</div>
<div class="t" style="left:746.00px;top:507.17px;font-size:8.1px;line-height:10.53px;color:#4b4b4b;transform:scaleX(1.0080);transform-origin:0 50%;">0 B/s</div>
<div class="t" style="left:788.50px;top:507.17px;font-size:8.1px;line-height:10.53px;color:#4b4b4b;transform:scaleX(0.9006);transform-origin:0 50%;">0 IOPS</div>
<div class="t" style="left:835.60px;top:507.17px;font-size:8.1px;line-height:10.53px;color:#4b4b4b;transform:scaleX(0.9006);transform-origin:0 50%;">0 IOPS</div>
<div class="t" style="left:895.00px;top:507.17px;font-size:8.1px;line-height:10.53px;color:#4b4b4b;transform:scaleX(1.0080);transform-origin:0 50%;">0 B/s</div>
<div class="t" style="left:948.80px;top:507.17px;font-size:8.1px;line-height:10.53px;color:#4b4b4b;transform:scaleX(0.9006);transform-origin:0 50%;">0 IOPS</div>
<div class="t" style="left:1008.50px;top:507.17px;font-size:8.1px;line-height:10.53px;color:#4b4b4b;transform:scaleX(1.0080);transform-origin:0 50%;">0 B/s</div>
<div class="t" style="left:1062.40px;top:507.17px;font-size:8.1px;line-height:10.53px;color:#4b4b4b;transform:scaleX(0.9213);transform-origin:0 50%;">0 B</div>
<div class="t" style="left:1119.70px;top:507.17px;font-size:8.1px;line-height:10.53px;color:#4b4b4b;transform:scaleX(0.9213);transform-origin:0 50%;">0 B</div>
<div class="ln" style="top:549px"></div>
<div class="cb" style="left:22.1px;top:532.86px"></div>
<div class="t" style="left:51.00px;top:531.89px;font-size:8.1px;line-height:10.53px;color:#3a7da2;transform:scaleX(1.0225);transform-origin:0 50%;">/dev/dax0.0</div>
<div class="t" style="left:108.40px;top:531.89px;font-size:8.1px;line-height:10.53px;color:#3a7da2;transform:scaleX(0.9783);transform-origin:0 50%;">Sds-sio-car-s108.int.belbone.be</div>
<div class="t" style="left:234.00px;top:531.89px;font-size:8.1px;line-height:10.53px;color:#4b4b4b;transform:scaleX(0.9687);transform-origin:0 50%;">NVDIMM</div>
<div class="t" style="left:304.00px;top:531.89px;font-size:8.1px;line-height:10.53px;color:#4b4b4b;transform:scaleX(0.8716);transform-origin:0 50%;">OK</div>
<div class="t" style="left:357.60px;top:531.89px;font-size:8.1px;line-height:10.53px;color:#4b4b4b;transform:scaleX(0.9297);transform-origin:0 50%;">31.35 GB</div>
<div class="t" style="left:411.80px;top:531.89px;font-size:8.1px;line-height:10.53px;color:#4b4b4b;transform:scaleX(0.9473);transform-origin:0 50%;">23.34 GB</div>
<div class="t" style="left:468.80px;top:531.89px;font-size:8.1px;line-height:10.53px;color:#4b4b4b;transform:scaleX(0.9438);transform-origin:0 50%;">0 µs</div>
<div class="t" style="left:518.70px;top:531.89px;font-size:8.1px;line-height:10.53px;color:#3a7da2;transform:scaleX(0.9143);transform-origin:0 50%;">CAR-AP01</div>
<div class="t" style="left:607.30px;top:531.89px;font-size:8.1px;line-height:10.53px;color:#777;transform:scaleX(0.8533);transform-origin:0 50%;">--</div>
<div class="t" style="left:681.60px;top:531.89px;font-size:8.1px;line-height:10.53px;color:#4b4b4b;transform:scaleX(0.9855);transform-origin:0 50%;">Acceleration</div>
<div class="t" style="left:746.00px;top:531.89px;font-size:8.1px;line-height:10.53px;color:#4b4b4b;transform:scaleX(1.0080);transform-origin:0 50%;">0 B/s</div>
<div class="t" style="left:788.50px;top:531.89px;font-size:8.1px;line-height:10.53px;color:#4b4b4b;transform:scaleX(0.9006);transform-origin:0 50%;">0 IOPS</div>
<div class="t" style="left:835.60px;top:531.89px;font-size:8.1px;line-height:10.53px;color:#4b4b4b;transform:scaleX(0.9006);transform-origin:0 50%;">0 IOPS</div>
<div class="t" style="left:895.00px;top:531.89px;font-size:8.1px;line-height:10.53px;color:#4b4b4b;transform:scaleX(1.0080);transform-origin:0 50%;">0 B/s</div>
<div class="t" style="left:948.80px;top:531.89px;font-size:8.1px;line-height:10.53px;color:#4b4b4b;transform:scaleX(0.9006);transform-origin:0 50%;">0 IOPS</div>
<div class="t" style="left:1008.50px;top:531.89px;font-size:8.1px;line-height:10.53px;color:#4b4b4b;transform:scaleX(1.0080);transform-origin:0 50%;">0 B/s</div>
<div class="t" style="left:1062.40px;top:531.89px;font-size:8.1px;line-height:10.53px;color:#4b4b4b;transform:scaleX(0.9213);transform-origin:0 50%;">0 B</div>
<div class="t" style="left:1119.70px;top:531.89px;font-size:8.1px;line-height:10.53px;color:#4b4b4b;transform:scaleX(0.9213);transform-origin:0 50%;">0 B</div>
<div class="ln" style="top:574px"></div>
<div class="cb" style="left:22.1px;top:557.58px"></div>
<div class="t" style="left:51.00px;top:556.62px;font-size:8.1px;line-height:10.53px;color:#3a7da2;transform:scaleX(1.0225);transform-origin:0 50%;">/dev/dax0.0</div>
<div class="t" style="left:108.40px;top:556.62px;font-size:8.1px;line-height:10.53px;color:#3a7da2;transform:scaleX(0.9783);transform-origin:0 50%;">Sds-sio-car-s104.int.belbone.be</div>
<div class="t" style="left:234.00px;top:556.62px;font-size:8.1px;line-height:10.53px;color:#4b4b4b;transform:scaleX(0.9687);transform-origin:0 50%;">NVDIMM</div>
<div class="t" style="left:304.00px;top:556.62px;font-size:8.1px;line-height:10.53px;color:#4b4b4b;transform:scaleX(0.8716);transform-origin:0 50%;">OK</div>
<div class="t" style="left:357.60px;top:556.62px;font-size:8.1px;line-height:10.53px;color:#4b4b4b;transform:scaleX(0.9297);transform-origin:0 50%;">31.35 GB</div>
<div class="t" style="left:411.80px;top:556.62px;font-size:8.1px;line-height:10.53px;color:#4b4b4b;transform:scaleX(0.9473);transform-origin:0 50%;">23.34 GB</div>
<div class="t" style="left:468.80px;top:556.62px;font-size:8.1px;line-height:10.53px;color:#4b4b4b;transform:scaleX(0.9438);transform-origin:0 50%;">0 µs</div>
<div class="t" style="left:518.70px;top:556.62px;font-size:8.1px;line-height:10.53px;color:#3a7da2;transform:scaleX(0.9143);transform-origin:0 50%;">CAR-AP01</div>
<div class="t" style="left:607.30px;top:556.62px;font-size:8.1px;line-height:10.53px;color:#777;transform:scaleX(0.8533);transform-origin:0 50%;">--</div>
<div class="t" style="left:681.60px;top:556.62px;font-size:8.1px;line-height:10.53px;color:#4b4b4b;transform:scaleX(0.9855);transform-origin:0 50%;">Acceleration</div>
<div class="t" style="left:746.00px;top:556.62px;font-size:8.1px;line-height:10.53px;color:#4b4b4b;transform:scaleX(1.0080);transform-origin:0 50%;">0 B/s</div>
<div class="t" style="left:788.50px;top:556.62px;font-size:8.1px;line-height:10.53px;color:#4b4b4b;transform:scaleX(0.9006);transform-origin:0 50%;">0 IOPS</div>
<div class="t" style="left:835.60px;top:556.62px;font-size:8.1px;line-height:10.53px;color:#4b4b4b;transform:scaleX(0.9006);transform-origin:0 50%;">0 IOPS</div>
<div class="t" style="left:895.00px;top:556.62px;font-size:8.1px;line-height:10.53px;color:#4b4b4b;transform:scaleX(1.0080);transform-origin:0 50%;">0 B/s</div>
<div class="t" style="left:948.80px;top:556.62px;font-size:8.1px;line-height:10.53px;color:#4b4b4b;transform:scaleX(0.9006);transform-origin:0 50%;">0 IOPS</div>
<div class="t" style="left:1008.50px;top:556.62px;font-size:8.1px;line-height:10.53px;color:#4b4b4b;transform:scaleX(1.0080);transform-origin:0 50%;">0 B/s</div>
<div class="t" style="left:1062.40px;top:556.62px;font-size:8.1px;line-height:10.53px;color:#4b4b4b;transform:scaleX(0.9213);transform-origin:0 50%;">0 B</div>
<div class="t" style="left:1119.70px;top:556.62px;font-size:8.1px;line-height:10.53px;color:#4b4b4b;transform:scaleX(0.9213);transform-origin:0 50%;">0 B</div>
<div class="abs" style="left:1169.5px;top:153.8px;width:13.9px;height:424px;background:#f3f2f4"></div>
<div class="abs" style="left:1171.5px;top:167.8px;width:9.8px;height:187.8px;background:#c1c1c1"></div>
<svg style="left:1173.3px;top:160px" width="5.6" height="3" viewBox="0 0 5.6 3"><path d="M0 3H5.6L2.8 0Z" fill="#a9a9a9"/></svg>
<svg style="left:1173.3px;top:569.5px" width="5.6" height="3" viewBox="0 0 5.6 3"><path d="M0 0H5.6L2.8 3Z" fill="#505050"/></svg>
<div class="abs" style="left:1198px;top:61px;width:221px;height:532px;background:#fff;border-left:1px solid #e6e5e8;box-sizing:border-box"></div>
<div class="t" style="left:1160.70px;width:300px;text-align:center;top:97.23px;font-size:11.8px;line-height:15.34px;color:#555;transform:scaleX(0.9721);transform-origin:50% 50%;">/dev/dax0.0</div>
<div class="abs" style="left:1230.1px;top:133px;width:161.7px;height:20.1px;background:#2d6fce;border-radius:1.5px"></div>
<div class="t" style="left:1160.70px;width:300px;text-align:center;top:138.31px;font-size:8.9px;line-height:11.57px;color:#fff;transform:scaleX(0.9595);transform-origin:50% 50%;-webkit-text-stroke:0.25px #fff;">View Details</div>
<div class="t" style="left:1210.20px;top:163.81px;font-size:10.3px;line-height:13.39px;color:#4f4f4f;transform:scaleX(0.9559);transform-origin:0 50%;">Topology</div>
<div class="abs" style="left:1209px;top:177.8px;width:203px;height:1px;background:#f6f5f8"></div>
<svg style="left:1200px;top:180px" width="219" height="140" viewBox="0 0 219 140">
<g fill="none" stroke="#dfe1e8" stroke-width="1">
<path d="M68.4 46H55.4Q51.9 46 51.9 49.5V62.5"/>
<path d="M152.2 46H166.4Q169.9 46 169.9 49.5V62.5"/>
<path d="M51.9 76.7V86.9"/>
<path d="M93 93.9H106.2Q109.7 93.9 109.7 90.4V73.6Q109.7 70.1 113.2 70.1H128.6"/>
<path d="M169.9 76.7V86.9M169.9 101V111.4"/>
</g></svg>
<div class="box" style="left:1268.4px;top:194.6px;width:83.8px;height:14.2px;"></div>
<div class="box" style="left:1268.4px;top:218.9px;width:83.8px;height:14.2px;"></div>
<div class="box" style="left:1209.4px;top:242.5px;width:83.1px;height:14.2px;"></div>
<div class="box" style="left:1209.0px;top:266.9px;width:84.0px;height:14.2px;background:#2d6fce;border-color:#2d6fce;"></div>
<div class="box" style="left:1328.6px;top:242.5px;width:82.6px;height:14.2px;"></div>
<div class="box" style="left:1328.6px;top:266.9px;width:82.6px;height:14.2px;"></div>
<div class="box" style="left:1328.6px;top:291.2px;width:82.6px;height:13.6px;"></div>
<div class="t" style="left:1160.30px;width:300px;text-align:center;top:197.79px;font-size:7.4px;line-height:9.62px;color:#4a4a4a;transform:scaleX(0.9739);transform-origin:50% 50%;">System sio-car-gw-1</div>
<div class="t" style="left:1160.30px;width:300px;text-align:center;top:222.09px;font-size:7.4px;line-height:9.62px;color:#4a4a4a;transform:scaleX(0.9207);transform-origin:50% 50%;">PD CAR-PD01</div>
<div class="t" style="left:1213.70px;top:245.69px;font-size:7.4px;line-height:9.62px;color:#4a4a4a;transform:scaleX(0.9523);transform-origin:0 50%;">SDS Sds-sio-car-s102...</div>
<div class="t" style="left:1101.20px;width:300px;text-align:center;top:270.09px;font-size:7.4px;line-height:9.62px;color:#fff;transform:scaleX(1.0102);transform-origin:50% 50%;-webkit-text-stroke:0.2px #fff;">Device /dev/dax0.0</div>
<div class="t" style="left:1219.90px;width:300px;text-align:center;top:245.69px;font-size:7.4px;line-height:9.62px;color:#4a4a4a;transform:scaleX(0.9585);transform-origin:50% 50%;">0 SPs</div>
<div class="t" style="left:1219.90px;width:300px;text-align:center;top:270.09px;font-size:7.4px;line-height:9.62px;color:#4a4a4a;transform:scaleX(1.0053);transform-origin:50% 50%;">0 Volumes</div>
<div class="t" style="left:1219.90px;width:300px;text-align:center;top:294.09px;font-size:7.4px;line-height:9.62px;color:#4a4a4a;transform:scaleX(1.0175);transform-origin:50% 50%;">0 Hosts</div>
<div class="t" style="left:1209.60px;top:326.00px;font-size:10.3px;line-height:13.39px;color:#4f4f4f;transform:scaleX(0.9618);transform-origin:0 50%;">Performance</div>
<div class="abs" style="left:1209px;top:339.8px;width:203px;height:1px;background:#e4e3e6"></div>
<div class="t" style="left:1234.10px;top:368.45px;font-size:15px;line-height:19.5px;color:#484848;transform:scaleX(0.8989);transform-origin:0 50%;">0</div>
<div class="t" style="left:1243.60px;top:375.13px;font-size:8.8px;line-height:11.44px;color:#4a4a4a;transform:scaleX(0.8977);transform-origin:0 50%;">µs</div>
<div class="t" style="left:1093.10px;width:300px;text-align:center;top:387.73px;font-size:8.5px;line-height:11.05px;color:#4a4a4a;transform:scaleX(0.9906);transform-origin:50% 50%;">Latency</div>
<div class="t" style="left:1294.60px;top:368.45px;font-size:15px;line-height:19.5px;color:#484848;transform:scaleX(0.8989);transform-origin:0 50%;">0</div>
<div class="t" style="left:1304.10px;top:375.13px;font-size:8.8px;line-height:11.44px;color:#4a4a4a;transform:scaleX(0.9205);transform-origin:0 50%;">kIOPS</div>
<div class="t" style="left:1161.05px;width:300px;text-align:center;top:387.73px;font-size:8.5px;line-height:11.05px;color:#4a4a4a;transform:scaleX(0.8862);transform-origin:50% 50%;">IOPS</div>
<div class="t" style="left:1367.30px;top:368.45px;font-size:15px;line-height:19.5px;color:#484848;transform:scaleX(0.8989);transform-origin:0 50%;">0</div>
<div class="t" style="left:1376.80px;top:375.13px;font-size:8.8px;line-height:11.44px;color:#4a4a4a;transform:scaleX(1.0221);transform-origin:0 50%;">B/s</div>
<div class="t" style="left:1228.55px;width:300px;text-align:center;top:387.73px;font-size:8.5px;line-height:11.05px;color:#4a4a4a;transform:scaleX(0.9949);transform-origin:50% 50%;">Bandwidth</div>
<div class="t" style="left:1209.60px;top:429.81px;font-size:10.3px;line-height:13.39px;color:#4f4f4f;transform:scaleX(0.9266);transform-origin:0 50%;">Rebuild and Rebalance</div>
<div class="abs" style="left:1209px;top:443.4px;width:203px;height:1px;background:#e4e3e6"></div>
<div class="t" style="left:1248.80px;top:472.05px;font-size:15px;line-height:19.5px;color:#484848;transform:scaleX(0.8989);transform-origin:0 50%;">0</div>
<div class="t" style="left:1258.20px;top:478.73px;font-size:8.8px;line-height:11.44px;color:#4a4a4a;transform:scaleX(1.0221);transform-origin:0 50%;">B/s</div>
<div class="t" style="left:1110.00px;width:300px;text-align:center;top:492.03px;font-size:8.5px;line-height:11.05px;color:#4a4a4a;transform:scaleX(0.9921);transform-origin:50% 50%;">Rebuild</div>
<div class="t" style="left:1350.40px;top:472.05px;font-size:15px;line-height:19.5px;color:#484848;transform:scaleX(0.8989);transform-origin:0 50%;">0</div>
<div class="t" style="left:1359.80px;top:478.73px;font-size:8.8px;line-height:11.44px;color:#4a4a4a;transform:scaleX(1.0221);transform-origin:0 50%;">B/s</div>
<div class="t" style="left:1211.60px;width:300px;text-align:center;top:492.03px;font-size:8.5px;line-height:11.05px;color:#4a4a4a;transform:scaleX(0.9744);transform-origin:50% 50%;">Rebalance</div>
<div class="abs" style="left:1199px;top:564.5px;width:220px;height:1px;background:#ecebee"></div>
<svg style="left:1403.3px;top:577px" width="8" height="9" viewBox="0 0 8 9"><path d="M0.5 0.5L4 4.5L0.5 8.5M3.8 0.5L7.3 4.5L3.8 8.5" fill="none" stroke="#9a9a9e" stroke-width="0.8"/></svg>
</body></html>
